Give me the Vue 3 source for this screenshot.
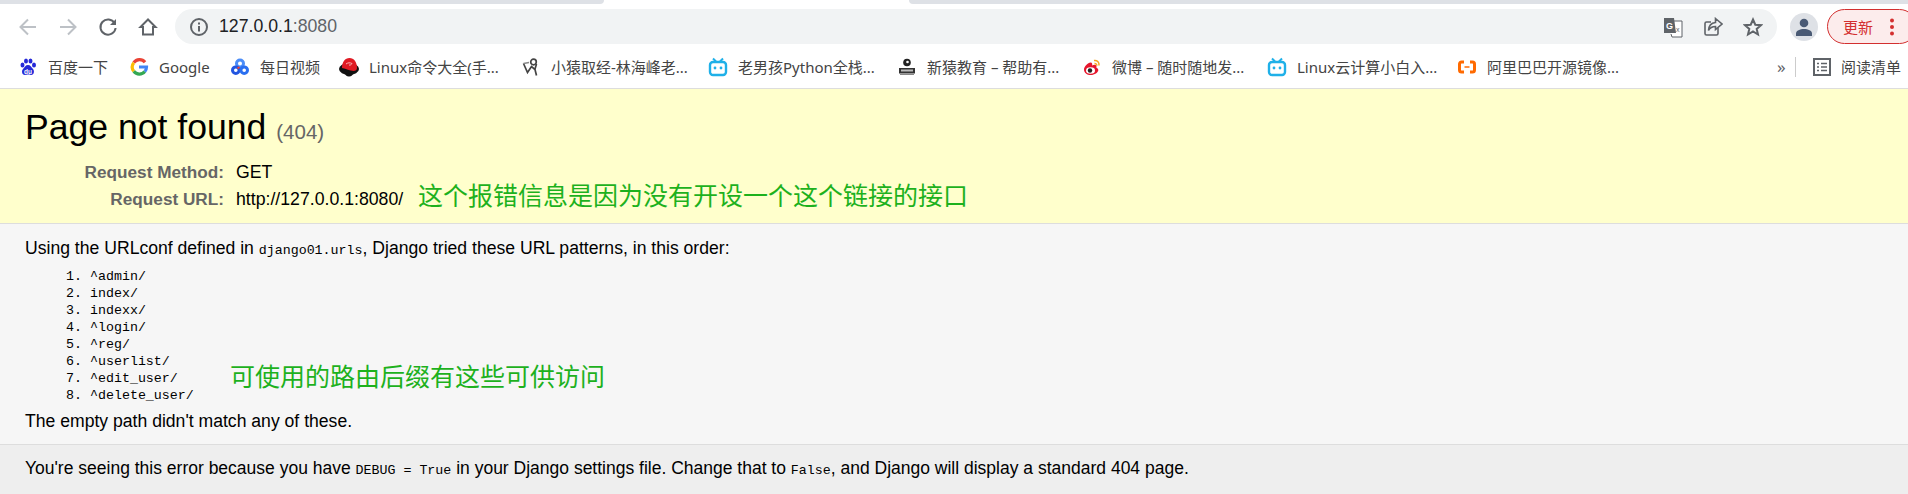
<template>
  <div class="page">
    <div class="tabstrip">
      <div class="strip strip-left"></div>
      <div class="tab"></div>
      <div class="strip strip-right"></div>
    </div>

    <div class="toolbar">
      <div class="nav">
        <svg width="20" height="20" viewBox="0 0 20 20" fill="none" stroke="#bdc1c6" stroke-width="2"><path d="M18 10H3M10 2.5L2.5 10l7.5 7.5" /></svg>
        <svg width="20" height="20" viewBox="0 0 20 20" fill="none" stroke="#bdc1c6" stroke-width="2"><path d="M2 10h15M10 2.5l7.5 7.5-7.5 7.5" /></svg>
        <svg width="20" height="20" viewBox="0 0 20 20" fill="none" stroke="#5f6368" stroke-width="2"><path d="M16.6 6.2A7.6 7.6 0 1 0 17.6 11" /><path d="M18 2v6h-6z" fill="#5f6368" stroke="none" /></svg>
        <svg width="20" height="20" viewBox="0 0 20 20" fill="none" stroke="#5f6368" stroke-width="2"><path d="M10 2.5L2.5 10H5v7.5h10V10h2.500z" /></svg>
      </div>
      <div class="urlbar">
        <svg class="info" width="20" height="20" viewBox="0 0 20 20" fill="none" stroke="#5f6368" stroke-width="2"><circle cx="10" cy="10" r="8" /><path d="M10 9v5.500" /><path d="M10 5.500v2" /></svg>
        <span class="host">127.0.0.1</span><span class="port">:8080</span>
        <div class="url-actions">
          <svg width="20" height="22" viewBox="0 0 20 22"><path d="M6 5h13v16H9l-1-3" fill="#fff" stroke="#5f6368" /><path d="M1 2h10l2 15H1z" fill="#5f6368" /><text x="3" y="13" font-size="9" font-weight="700" fill="#fff" font-family="Liberation Sans">G</text><text x="13" y="16" font-size="7" fill="#5f6368" font-family="Liberation Sans">x</text></svg>
          <svg width="20" height="20" viewBox="0 0 20 20" fill="none" stroke="#5f6368" stroke-width="1.600"><path d="M15 11v5.500a1.500 1.500 0 0 1-1.500 1.500h-10A1.500 1.500 0 0 1 2 16.500v-10A1.500 1.500 0 0 1 3.500 5H8" /><path d="M12.500 1.500L19 7l-6.500 5.500V9.500c-3.500 0-5.500 1-7 4 .2-4.500 2.500-7.500 7-8z" fill="#f1f3f4" /></svg>
          <svg width="20" height="20" viewBox="0 0 20 20" fill="none" stroke="#5f6368" stroke-width="2"><path d="M10 2.500l2.300 5.200 5.700.5-4.300 3.700 1.300 5.600-5-3-5 3 1.300-5.600L2 8.200l5.700-.5z" /></svg>
        </div>
      </div>
      <div class="avatar">
        <svg width="18" height="18" viewBox="0 0 18 18" fill="#4a5a74"><circle cx="9" cy="5" r="4.300" /><path d="M1 18v-2.500C1 12.500 5 11 9 11s8 1.500 8 4.500V18z" /></svg>
      </div>
      <div class="update">
        <span>更新</span>
        <svg width="4" height="18" viewBox="0 0 4 18" fill="#d32f2f"><circle cx="2" cy="2.500" r="2" /><circle cx="2" cy="9" r="2" /><circle cx="2" cy="15.500" r="2" /></svg>
      </div>
    </div>

    <div class="bookmarks">
      <div v-for="b in bookmarks" :key="b.label" class="bookmark" :style="{ width: b.width + 'px' }">
        <svg class="fav" width="18" height="18" viewBox="0 0 18 18">
          <g v-if="b.icon === 'baidu'" fill="#2529d8">
            <ellipse cx="3.500" cy="7" rx="2" ry="2.500" /><ellipse cx="7" cy="3" rx="2" ry="2.500" /><ellipse cx="11.500" cy="3" rx="2" ry="2.500" /><ellipse cx="15" cy="7" rx="2" ry="2.500" />
            <path d="M9 7c-2.500 0-3 2-5 4-1.500 1.500-1.500 6 2 6 1.300 0 2-.4 3-.4s1.700.4 3 .4c3.500 0 3.500-4.500 2-6-2-2-2.500-4-5-4z" />
            <text x="5" y="15.500" font-size="6.500" font-weight="700" fill="#fff" font-family="Liberation Sans">du</text>
          </g>
          <g v-else-if="b.icon === 'google'" fill="none" stroke-width="3.200">
            <path d="M15 4.200A7 7 0 0 0 3.800 4.700" stroke="#ea4335" />
            <path d="M3.800 4.700a7 7 0 0 0 0 8.600" stroke="#fbbc05" />
            <path d="M3.800 13.300a7 7 0 0 0 11 .2" stroke="#34a853" />
            <path d="M9 9h7.500c0 2-.5 3.400-1.700 4.500" stroke="#4285f4" />
          </g>
          <g v-else-if="b.icon === 'video'" fill="none" stroke-width="3">
            <circle cx="9" cy="5.500" r="3.500" stroke="#4b8df8" />
            <circle cx="4.800" cy="12.200" r="3.300" stroke="#2255e0" />
            <circle cx="13.200" cy="12.200" r="3.300" stroke="#2a6ff0" />
            <path d="M6.500 10.500l2-1.500" stroke="#e8453c" stroke-width="2" />
          </g>
          <g v-else-if="b.icon === 'redhat'">
            <ellipse cx="9" cy="11" rx="10" ry="6" fill="#111" />
            <path d="M9 18.500c-2.500 0-4-1.500-4-3l8 0c0 1.500-1.500 3-4 3z" fill="#111" />
            <path d="M2 10C2 4 5 0 9.500 0s7.500 4 7.500 10c0 2-1.500 3-3.500 3-4 0-7-2.500-11.500-3z" fill="#e01b24" />
            <path d="M6 6c2-1.500 4-1.500 6-.5-1 1-1 2-3 1.500" fill="none" stroke="#f7b5b5" stroke-width="1" />
          </g>
          <g v-else-if="b.icon === 'monkey'" fill="none" stroke="#444" stroke-width="1.700">
            <circle cx="11.500" cy="4" r="2.800" />
            <path d="M1.500 5.500L5.500 14.500 9.500 8.500l3.500 3 1.500 6M14.500 6L13 11" />
            <path d="M1.500 5.500L7 4.500" stroke="#888" stroke-width="1.500" />
          </g>
          <g v-else-if="b.icon === 'bili'">
            <path d="M4 0.500L7 3.500M14 0.500L11 3.500" stroke="#1fb0e8" stroke-width="2" fill="none" />
            <rect x="1" y="4" width="16" height="13" rx="3" fill="#fff" stroke="#1fb0e8" stroke-width="2.400" />
            <circle cx="6" cy="10" r="1.400" fill="#1fb0e8" /><circle cx="12" cy="10" r="1.400" fill="#1fb0e8" />
          </g>
          <g v-else-if="b.icon === 'xinyuan'">
            <circle cx="9" cy="4.500" r="3.800" fill="#222" />
            <circle cx="9.500" cy="4" r="1.300" fill="#fff" />
            <rect x="1" y="10" width="16" height="5.500" fill="#333" />
            <rect x="3" y="11.500" width="12" height="2" fill="#bbb" />
            <rect x="2" y="16" width="14" height="1" fill="#888" />
          </g>
          <g v-else-if="b.icon === 'weibo'">
            <path d="M1 11.500c0-3 4-7 6.500-7 2 0 2 2 1.500 3 2-1 4.500-1 4.500 1 0 .5 0 1-.2 1.200 1.200.4 2 1.200 2 2.300 0 2.500-3.800 5-7.500 5C4 17 1 15 1 11.500z" fill="#e6162d" />
            <ellipse cx="7.500" cy="12.500" rx="4.500" ry="3.300" fill="#fff" />
            <circle cx="7" cy="12.500" r="2.200" fill="#222" />
            <path d="M11 2.500c3-.6 5.500 1.800 5 5M11.500 5.500c1.300-.2 2.500 1 2.200 2.200" fill="none" stroke="#f5a623" stroke-width="1.500" />
          </g>
          <g v-else-if="b.icon === 'ali'" fill="none" stroke="#ff6a00" stroke-width="3">
            <path d="M6 4H3.500A2 2 0 0 0 1.500 6v6a2 2 0 0 0 2 2H6M12 4h2.500a2 2 0 0 1 2 2v6a2 2 0 0 1-2 2H12" />
            <path d="M6.500 9h5" stroke-width="1.500" />
          </g>
        </svg>
        <span>{{ b.label }}</span>
      </div>
      <div class="more">»</div>
      <div class="sep"></div>
      <svg class="list" width="18" height="18" viewBox="0 0 18 18" fill="none" stroke="#5f6368" stroke-width="2"><rect x="1" y="1" width="16" height="16" /><path d="M4 5.500h2M8 5.500h6M4 9h2M8 9h6M4 12.500h2M8 12.500h6" stroke-width="1.500" /></svg>
      <span class="reading">阅读清单</span>
    </div>

    <div id="summary">
      <h1>Page not found <span>(404)</span></h1>
      <table>
        <tbody>
          <tr><th>Request Method:</th><td>GET</td></tr>
          <tr><th>Request URL:</th><td>http://127.0.0.1:8080/</td></tr>
        </tbody>
      </table>
      <div class="note note-top">这个报错信息是因为没有开设一个这个链接的接口</div>
    </div>

    <div id="info">
      <p>Using the URLconf defined in <code>django01.urls</code>, Django tried these URL patterns, in this order:</p>
      <ol>
        <li v-for="p in patterns" :key="p">{{ p }}</li>
      </ol>
      <p>The empty path didn't match any of these.</p>
      <div class="note note-bottom">可使用的路由后缀有这些可供访问</div>
    </div>

    <div id="explanation">
      <p>You're seeing this error because you have <code>DEBUG = True</code> in your Django settings file. Change that to <code>False</code>, and Django will display a standard 404 page.</p>
    </div>
  </div>
</template>

<script setup>
const bookmarks = [
  { label: '百度一下', icon: 'baidu', width: 111 },
  { label: 'Google', icon: 'google', width: 101 },
  { label: '每日视频', icon: 'video', width: 109 },
  { label: 'Linux命令大全(手...', icon: 'redhat', width: 182 },
  { label: '小猿取经-林海峰老...', icon: 'monkey', width: 187 },
  { label: '老男孩Python全栈...', icon: 'bili', width: 189 },
  { label: '新猿教育 – 帮助有...', icon: 'xinyuan', width: 185 },
  { label: '微博 – 随时随地发...', icon: 'weibo', width: 185 },
  { label: 'Linux云计算小白入...', icon: 'bili', width: 190 },
  { label: '阿里巴巴开源镜像...', icon: 'ali', width: 319 }
]

const patterns = ['^admin/', 'index/', 'indexx/', '^login/', '^reg/', '^userlist/', '^edit_user/', '^delete_user/']
</script>

<style>
html, body {
  margin: 0;
  padding: 0;
  background: #eee;
  overflow: hidden;
}
</style>

<style scoped>
.page {
  width: 1908px;
  height: 494px;
  overflow: hidden;
  font-family: "Liberation Sans", "Noto Sans CJK SC", sans-serif;
  color: #000;
  background: #fff;
}
.tabstrip {
  display: flex;
  height: 5px;
  background: #fff;
}
.strip {
  background: #dee1e6;
  height: 4px;
}
.strip-left {
  width: 604px;
  border-bottom-right-radius: 6px;
}
.tab {
  width: 305px;
}
.strip-right {
  flex: 1;
  border-bottom-left-radius: 6px;
}
.toolbar {
  display: flex;
  align-items: center;
  height: 40px;
  box-sizing: border-box;
  padding: 4px 0 1px 18px;
  background: #fff;
  overflow: hidden;
}
.nav {
  display: flex;
  gap: 20px;
  width: 157px;
  flex-shrink: 0;
}
.urlbar {
  display: flex;
  align-items: center;
  width: 1602px;
  height: 35px;
  flex-shrink: 0;
  box-sizing: border-box;
  padding-left: 14px;
  background: #f1f3f4;
  border-radius: 18px;
  font-size: 17.700px;
}
.info {
  margin-right: 10px;
}
.host {
  color: #202124;
}
.port {
  color: #5f6368;
}
.url-actions {
  display: flex;
  align-items: center;
  gap: 20px;
  margin-left: auto;
  margin-right: 14px;
}
.avatar {
  display: flex;
  align-items: center;
  justify-content: center;
  width: 28px;
  height: 28px;
  flex-shrink: 0;
  margin-left: 13px;
  background: #dee1e6;
  border-radius: 50%;
}
.update {
  display: flex;
  align-items: center;
  gap: 17px;
  box-sizing: border-box;
  width: 90px;
  height: 35px;
  margin-left: 9px;
  padding-left: 15px;
  flex-shrink: 0;
  background: #fcecec;
  border: 1px solid #d32f2f;
  border-radius: 18px;
  color: #d32f2f;
  font-size: 15px;
}
.bookmarks {
  display: flex;
  align-items: center;
  height: 44px;
  box-sizing: border-box;
  padding-left: 19px;
  background: #fff;
  border-bottom: 1px solid #ddd;
  font-family: "Noto Sans", "Noto Sans CJK SC", sans-serif;
  font-size: 15px;
  color: #444;
}
.bookmark {
  display: flex;
  align-items: center;
  flex-shrink: 0;
  white-space: nowrap;
}
.fav {
  margin-right: 11px;
  flex-shrink: 0;
  overflow: visible;
}
.more {
  width: 18px;
  font-size: 17px;
  color: #5f6368;
  flex-shrink: 0;
}
.sep {
  width: 1px;
  height: 20px;
  margin-right: 17px;
  background: #ccc;
  flex-shrink: 0;
}
.list {
  margin-right: 10px;
  flex-shrink: 0;
}
.reading {
  white-space: nowrap;
  flex-shrink: 0;
}
#summary {
  position: relative;
  height: 135px;
  box-sizing: border-box;
  padding: 17px 25px 0;
  background: #ffc;
  border-bottom: 1px solid #ddd;
}
h1 {
  margin: 0 0 6px;
  font-size: 35.600px;
  line-height: 42px;
  font-weight: normal;
}
h1 span {
  font-size: 20.500px;
  color: #666;
}
table {
  border-collapse: collapse;
  font-size: 17.700px;
}
th, td {
  padding: 0;
  height: 26px;
  line-height: 26px;
}
tr + tr th, tr + tr td {
  padding-top: 1px;
}
th {
  width: 199px;
  padding-right: 12px;
  text-align: right;
  color: #666;
  font-size: 17.200px;
}
#info {
  position: relative;
  height: 221px;
  box-sizing: border-box;
  padding: 13px 25px 0;
  background: #f6f6f6;
  border-bottom: 1px solid #ddd;
  font-size: 17.600px;
}
p {
  margin: 0;
  line-height: 22px;
}
code {
  font-family: "Liberation Mono", monospace;
  font-size: 13.300px;
}
ol {
  margin: 6px 0 6px;
  padding-left: 65px;
}
li {
  height: 17px;
  line-height: 17px;
  font-family: "Liberation Mono", monospace;
  font-size: 13.300px;
}
#explanation {
  height: 49px;
  box-sizing: border-box;
  padding: 12px 25px 0;
  background: #eee;
  font-size: 17.500px;
}
.note {
  position: absolute;
  font-size: 25px;
  line-height: 30px;
  color: #1db11d;
  white-space: nowrap;
}
.note-top {
  left: 418px;
  top: 92px;
}
.note-bottom {
  left: 230px;
  top: 138px;
}
</style>
